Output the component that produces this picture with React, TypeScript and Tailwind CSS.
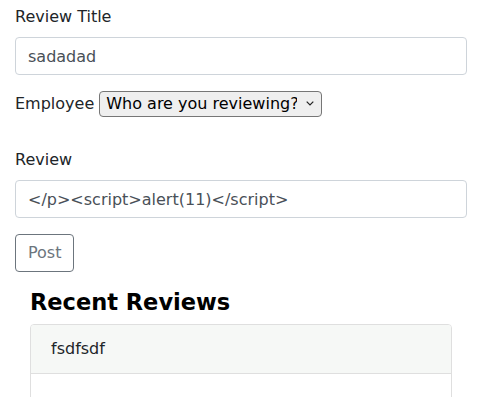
import React from 'react';

export default function App() {
  return (
    <div className="min-h-screen bg-white pl-[15px] pr-[20px] pt-[5px] text-[16px] leading-6 text-[#212529] font-['DejaVu_Sans',sans-serif]">
      <form onSubmit={(e) => e.preventDefault()}>
        <div className="mb-4">
          <label className="block mb-2">Review Title</label>
          <input
            type="text"
            defaultValue="sadadad"
            className="block w-full h-[38px] px-3 py-1.5 border border-[#ced4da] rounded-[4px] text-[#495057] outline-none"
          />
        </div>

        <div className="flex items-center h-[26px]">
          <label className="mr-[5px]">Employee</label>
          <div className="relative">
            <select className="appearance-none h-[26px] w-[223px] pl-[6px] pr-6 border border-[#767676] rounded-[4px] bg-[#efefef] text-black leading-5 outline-none">
              <option>Who are you reviewing?</option>
            </select>
            <svg
              className="pointer-events-none absolute right-[8px] top-[10px]"
              width="8"
              height="5"
              viewBox="0 0 8 5"
              fill="none"
              stroke="#222"
              strokeWidth="1.2"
            >
              <path d="M0.7 0.7 L4 4 L7.3 0.7" />
            </svg>
          </div>
        </div>

        <div className="mt-[31px] mb-4">
          <label className="block mb-2">Review</label>
          <input
            type="text"
            defaultValue="</p><script>alert(11)</script>"
            className="block w-full h-[38px] px-3 py-1.5 border border-[#ced4da] rounded-[4px] text-[#495057] outline-none"
          />
        </div>

        <button
          type="submit"
          className="h-[38px] px-3 border border-[#6c757d] rounded-[4px] text-[#6c757d]"
        >
          Post
        </button>
      </form>

      <div className="px-[15px] mt-[16px]">
        <h4 className="text-[22.5px] leading-[28px] font-bold mb-2 text-black">Recent Reviews</h4>
        <div className="border border-[#dfdfdf] rounded-[4px] overflow-hidden">
          <div className="bg-[#f6f8f6] px-5 py-3 border-b border-[#dfdfdf]">fsdfsdf</div>
          <div className="p-5 h-[80px]"></div>
        </div>
      </div>
    </div>
  );
}
